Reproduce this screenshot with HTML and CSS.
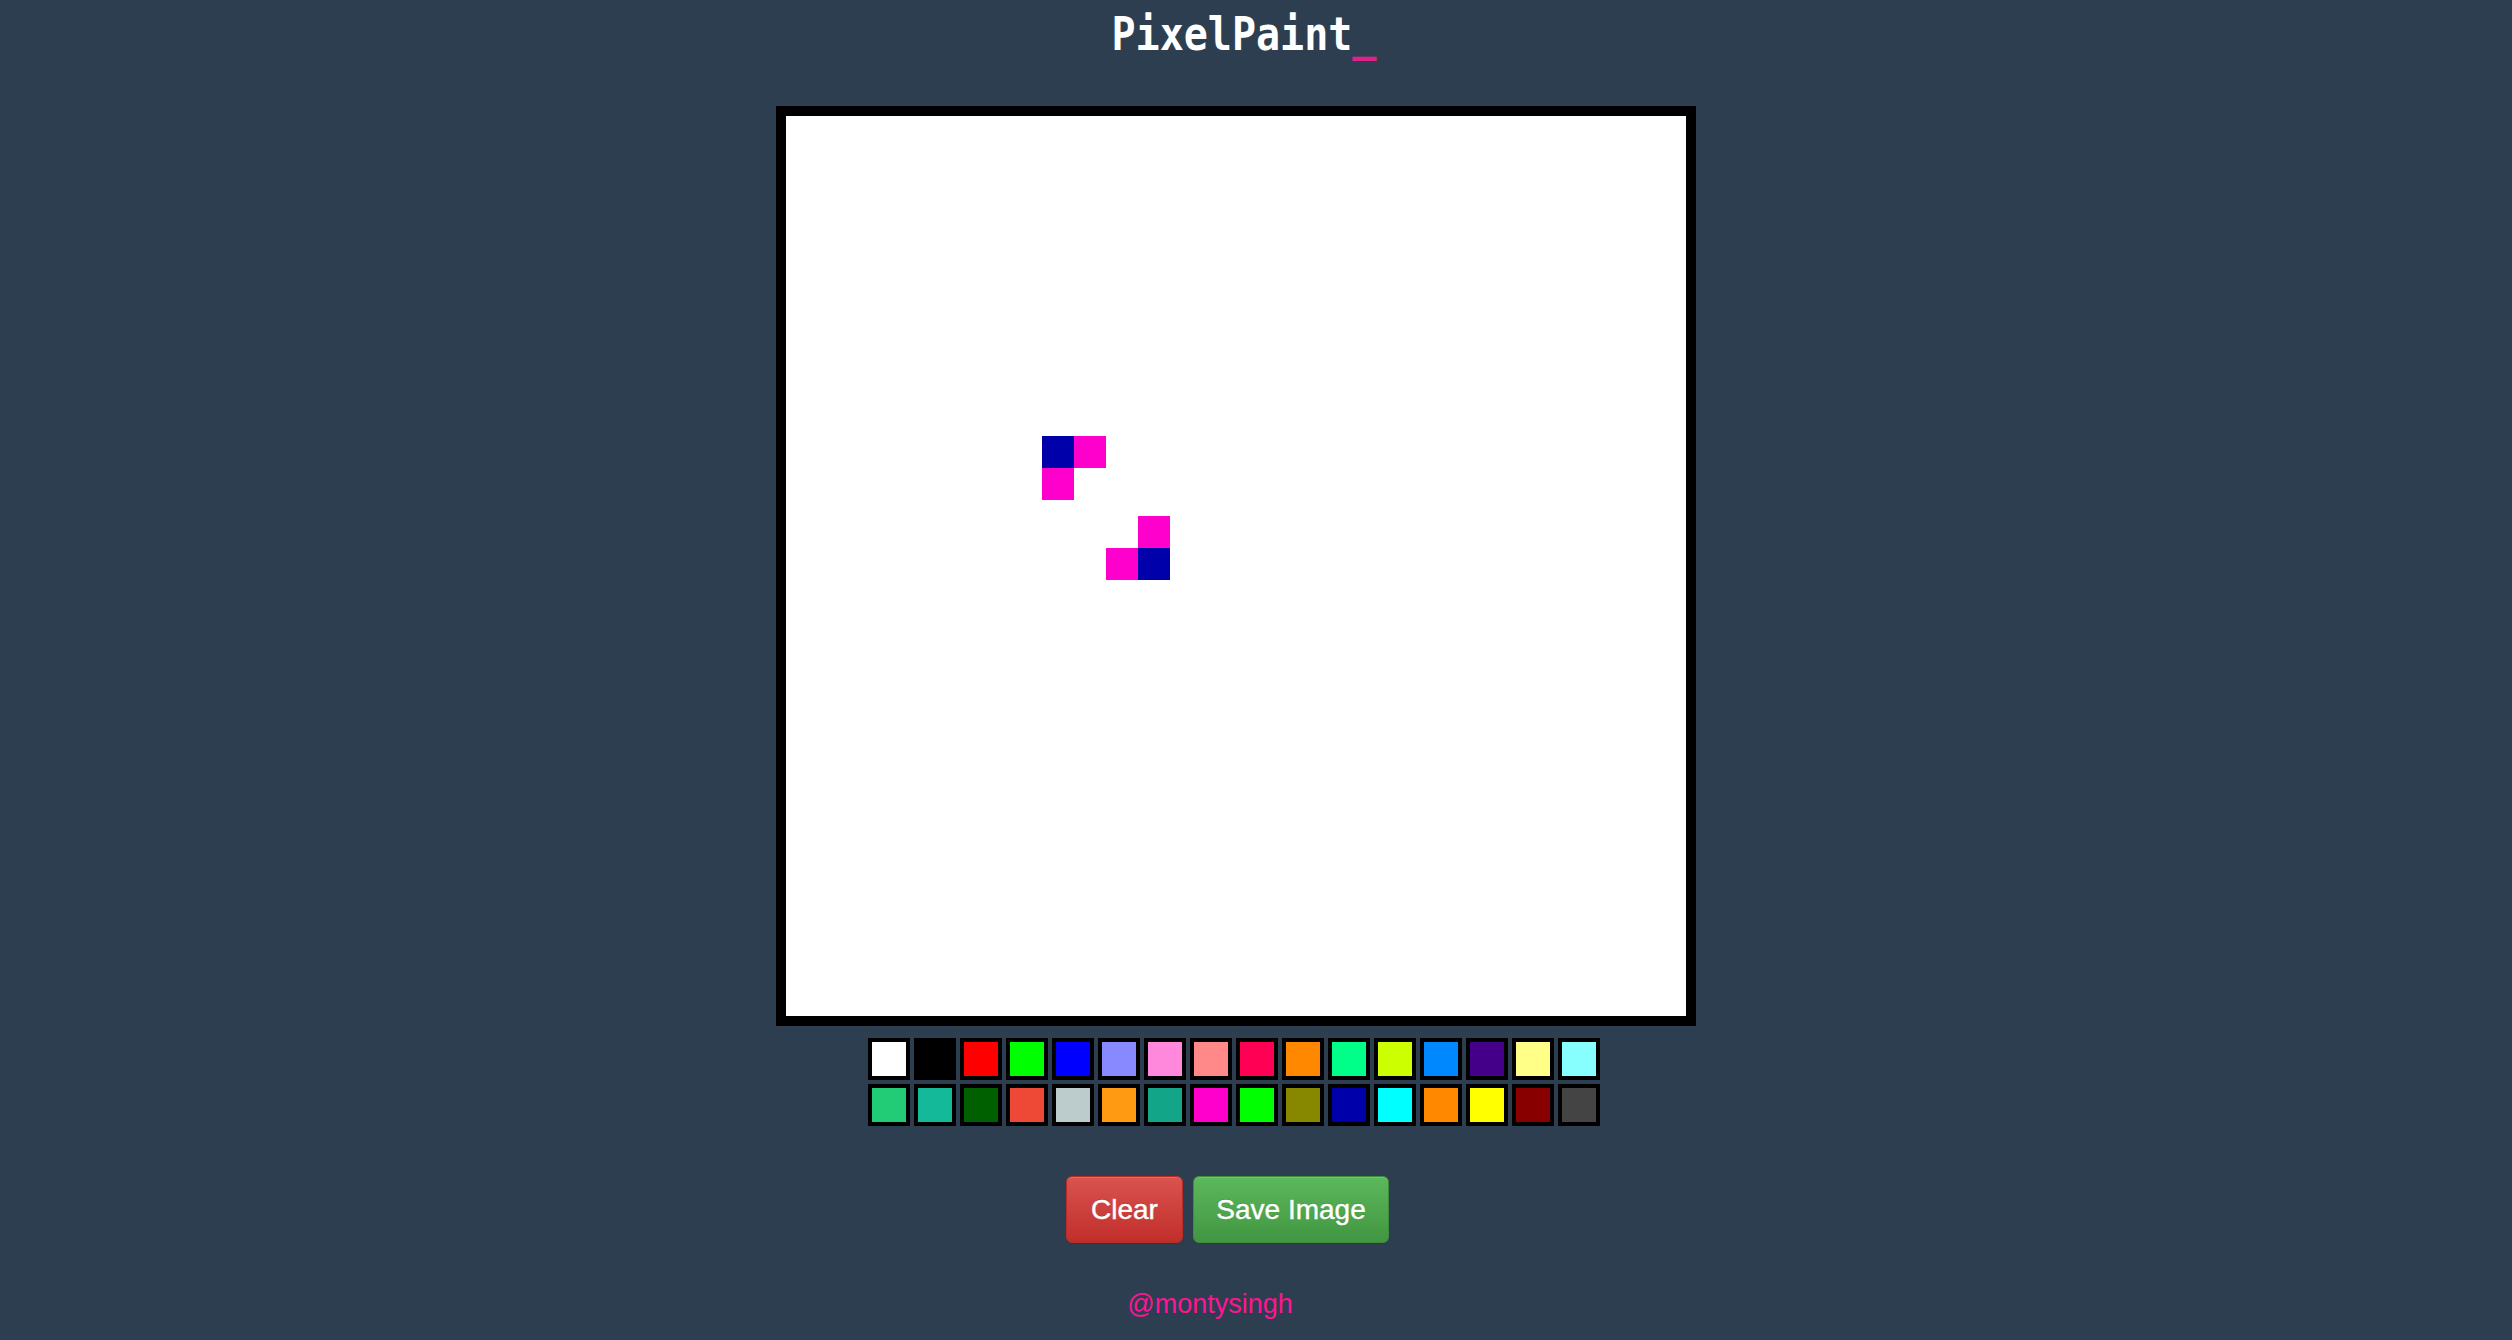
FILE: index.html
```html
<!DOCTYPE html>
<html lang="en">
<head>
<meta charset="utf-8">
<title>PixelPaint</title>
<link rel="stylesheet" href="styles.css">
</head>
<body>
<div class="app">
  <h1 class="title">PixelPaint<span class="cursor">_</span></h1>
  <div class="canvas">
    <div class="px blue" style="left:256px;top:320px"></div>
    <div class="px pink" style="left:288px;top:320px"></div>
    <div class="px pink" style="left:256px;top:352px"></div>
    <div class="px pink" style="left:352px;top:400px"></div>
    <div class="px pink" style="left:320px;top:432px"></div>
    <div class="px blue" style="left:352px;top:432px"></div>
  </div>
  <div class="palette">
    <div class="swatch" style="background:#ffffff"></div>
    <div class="swatch" style="background:#000000"></div>
    <div class="swatch" style="background:#ff0000"></div>
    <div class="swatch" style="background:#00ff00"></div>
    <div class="swatch" style="background:#0000ff"></div>
    <div class="swatch" style="background:#8888ff"></div>
    <div class="swatch" style="background:#ff88dd"></div>
    <div class="swatch" style="background:#ff8888"></div>
    <div class="swatch" style="background:#ff0055"></div>
    <div class="swatch" style="background:#ff8800"></div>
    <div class="swatch" style="background:#00ff88"></div>
    <div class="swatch" style="background:#ccff00"></div>
    <div class="swatch" style="background:#0088ff"></div>
    <div class="swatch" style="background:#440088"></div>
    <div class="swatch" style="background:#ffff88"></div>
    <div class="swatch" style="background:#88ffff"></div>
    <div class="swatch" style="background:#22cc77"></div>
    <div class="swatch" style="background:#14b99a"></div>
    <div class="swatch" style="background:#006000"></div>
    <div class="swatch" style="background:#ee4836"></div>
    <div class="swatch" style="background:#bccccc"></div>
    <div class="swatch" style="background:#ff9a12"></div>
    <div class="swatch" style="background:#12a587"></div>
    <div class="swatch" style="background:#ff00cc"></div>
    <div class="swatch" style="background:#00ff00"></div>
    <div class="swatch" style="background:#888800"></div>
    <div class="swatch" style="background:#0000aa"></div>
    <div class="swatch" style="background:#00ffff"></div>
    <div class="swatch" style="background:#ff8800"></div>
    <div class="swatch" style="background:#ffff00"></div>
    <div class="swatch" style="background:#880000"></div>
    <div class="swatch" style="background:#444444"></div>
  </div>
  <div class="actions">
    <button class="btn btn-clear">Clear</button>
    <button class="btn btn-save">Save Image</button>
  </div>
  <div class="footer">@montysingh</div>
</div>
</body>
</html>
```
FILE: styles.css
```css
html, body {
  margin: 0;
  padding: 0;
  background: #2c3e50;
}
body {
  font-family: "Liberation Sans", Arial, sans-serif;
}
.app {
  display: flex;
  flex-direction: column;
  align-items: center;
  padding-right: 40px;
}
.title {
  margin: 0;
  padding: 6px 0 0 16px;
  height: 60px;
  font-family: "DejaVu Sans Mono", monospace;
  font-weight: bold;
  font-size: 40px;
  line-height: 60px;
  color: #ffffff;
  transform: scaleY(1.16);
  transform-origin: 50% 50px;
}
.cursor {
  color: #e0218a;
}
.canvas {
  position: relative;
  margin-top: 40px;
  width: 900px;
  height: 900px;
  border: 10px solid #000;
  background: #fff;
}
.px {
  position: absolute;
  width: 32px;
  height: 32px;
}
.blue { background: #0000aa; }
.pink { background: #ff00cc; }
.palette {
  margin-top: 12px;
  display: grid;
  grid-template-columns: repeat(16, 42px);
  grid-auto-rows: 42px;
  gap: 4px;
  padding-right: 4px;
}
.swatch {
  box-sizing: border-box;
  border: 4px solid #000;
}
.actions {
  margin-top: 50px;
  display: flex;
  gap: 10px;
  padding-right: 17px;
}
.btn {
  box-sizing: border-box;
  height: 67px;
  padding: 0;
  border: 1px solid;
  border-radius: 6px;
  font-family: "Liberation Sans", Arial, sans-serif;
  font-size: 28px;
  line-height: 65px;
  color: #fff;
  -webkit-text-stroke: 0.4px #fff;
  text-shadow: 0 -1px 0 rgba(0,0,0,0.2);
  box-shadow: inset 0 1px 0 rgba(255,255,255,0.15), 0 1px 1px rgba(0,0,0,0.075);
  cursor: pointer;
}
.btn-clear {
  width: 117px;
  background: linear-gradient(to bottom, #d9534f 0, #c12e2a 100%);
  border-color: #b92c28;
}
.btn-save {
  width: 196px;
  background: linear-gradient(to bottom, #5cb85c 0, #419641 100%);
  border-color: #3e8f3e;
}
.footer {
  margin-top: 41px;
  padding-right: 52px;
  font-size: 27px;
  line-height: 40px;
  color: #ff1493;
}
```
